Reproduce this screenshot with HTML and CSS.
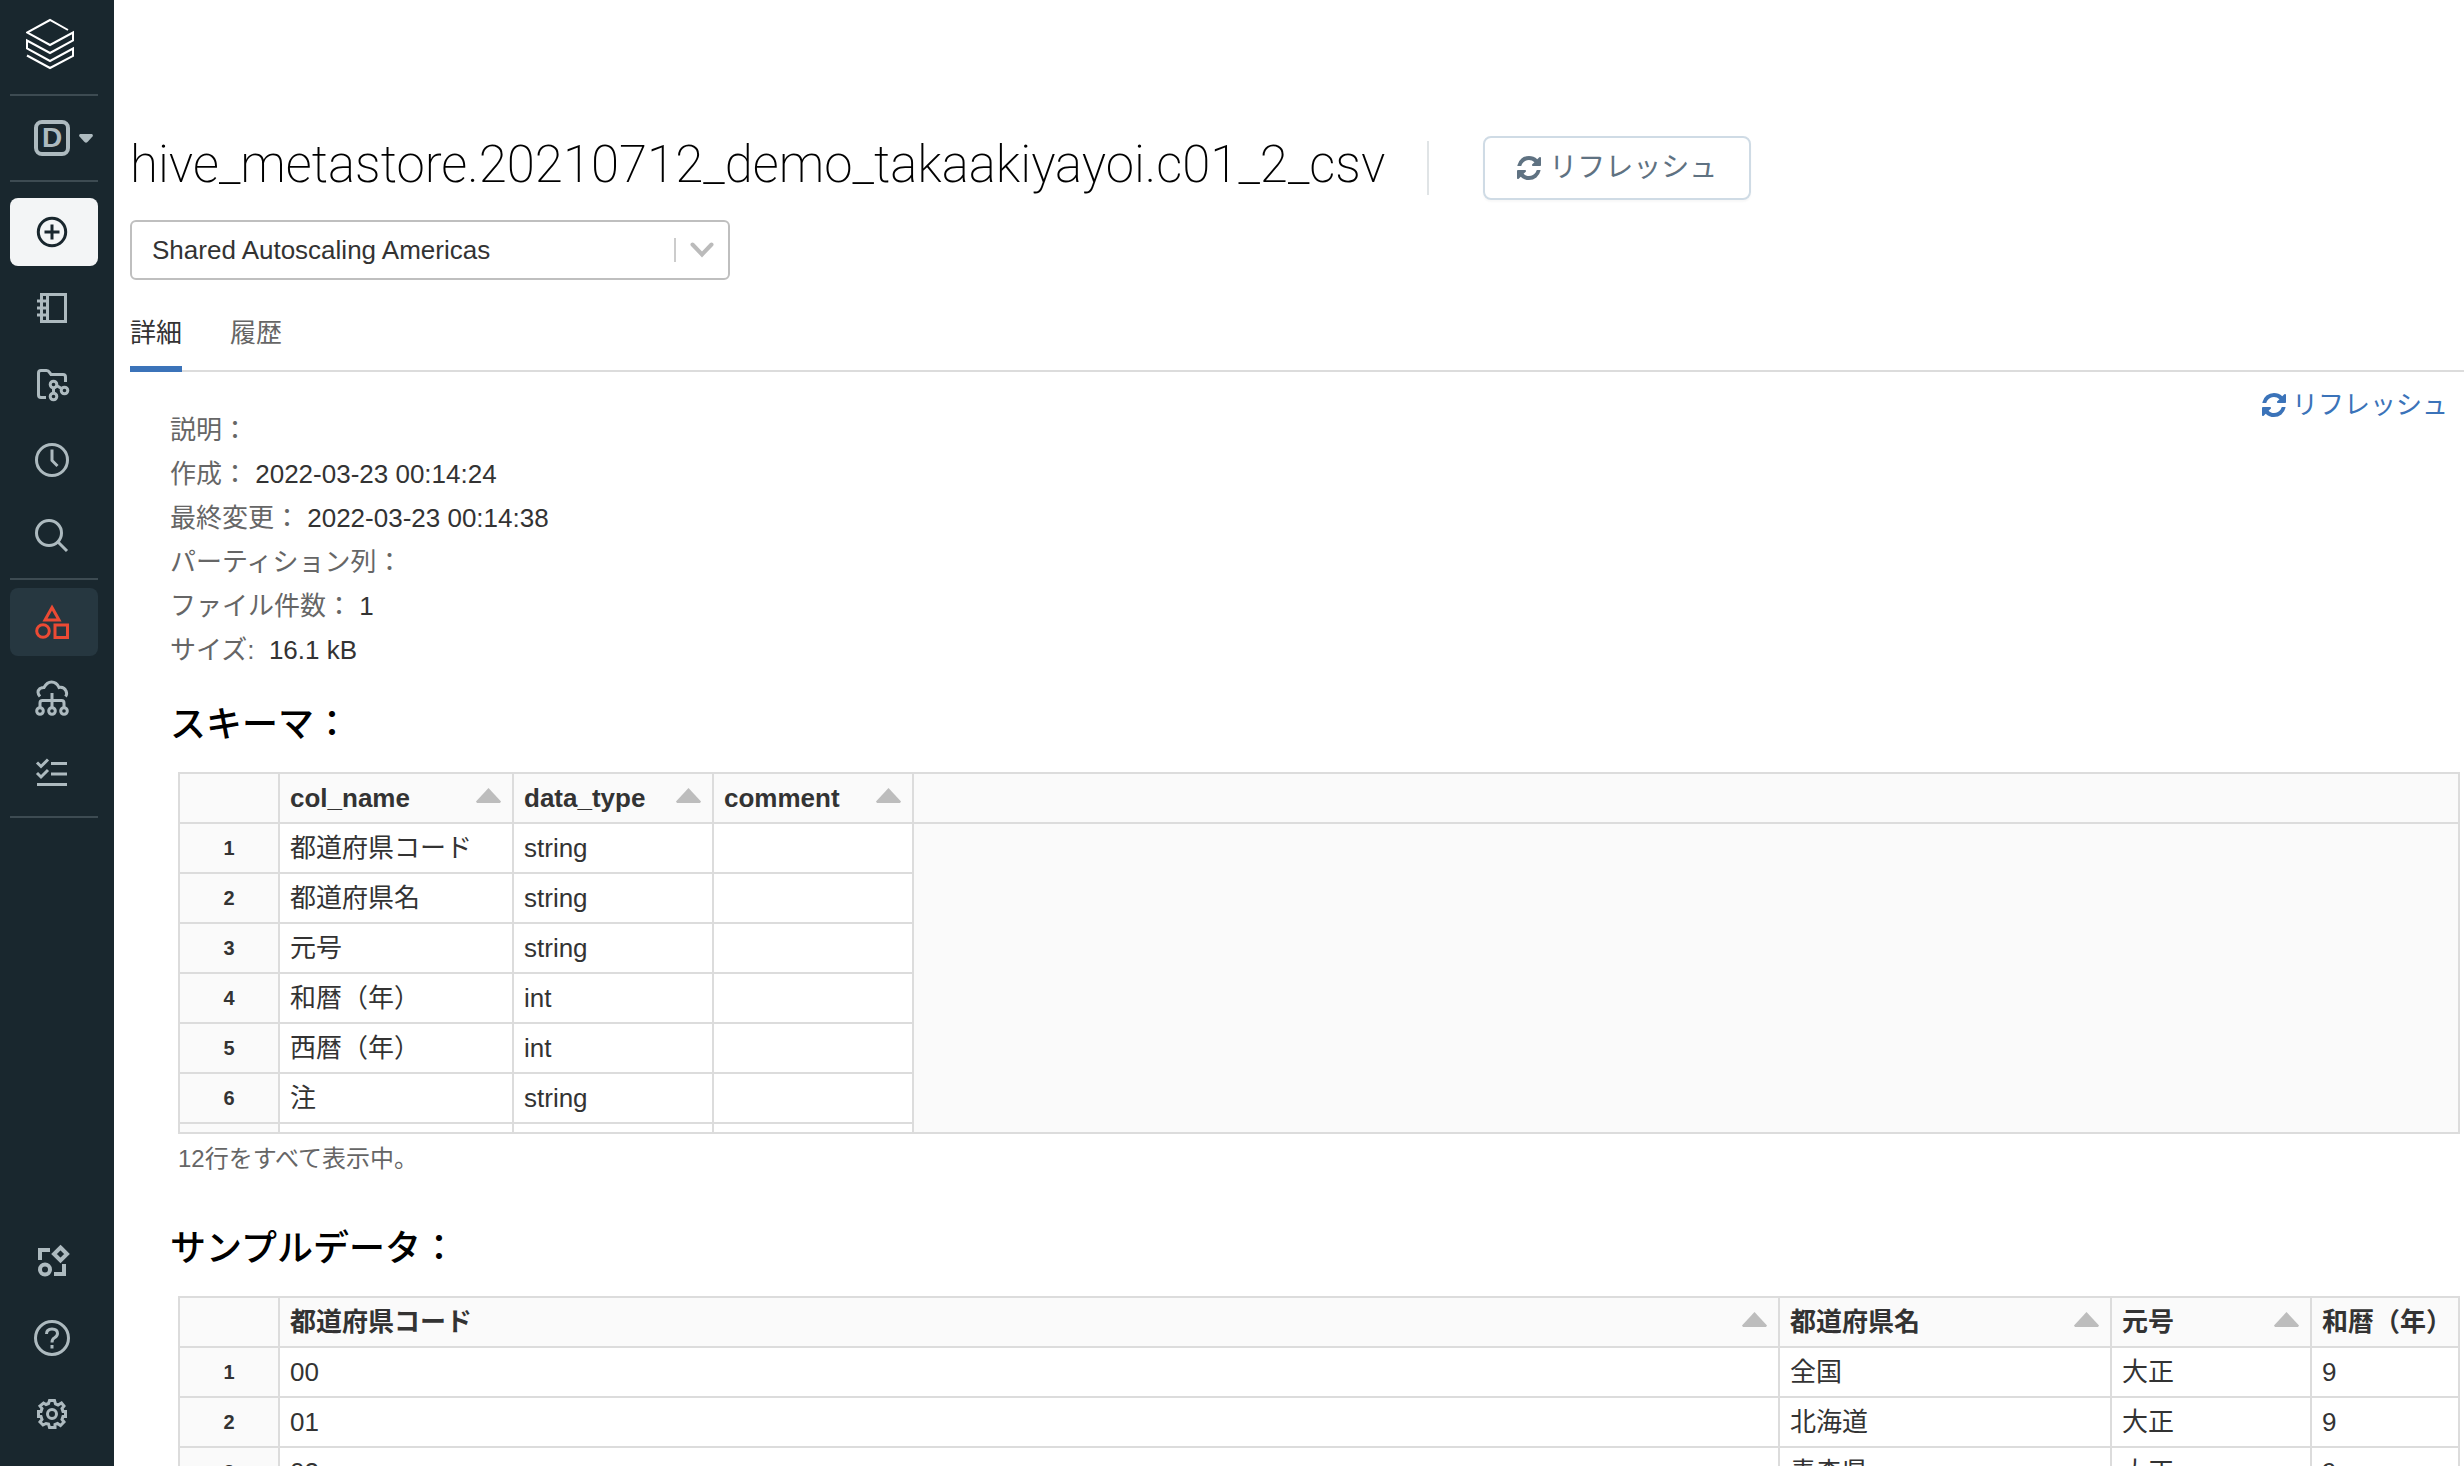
FILE: index.html
```html
<!doctype html>
<html lang="ja">

<head>
  <meta charset="UTF-8" />
  <meta name="viewport" content="width=device-width, initial-scale=1.0" />
  <title>c01_2_csv</title>
  <link rel="stylesheet" href="styles.css">
</head>

<body>
  <nav class="sidebar">
    <a class="logo" href="#" aria-label="Home">
      <svg viewBox="0 0 48 52" width="48" height="52">
        <path d="M42 12L24 2L1 14.500L24 27L47 14.500V22.500L24 35L1 22.500V30.500L24 43L47 30.500V38L24 50L1 37.500" />
      </svg>
    </a>
    <hr>
    <button class="nav-item persona" aria-label="Workspace">
      <span class="persona-badge">D</span>
      <svg class="solid" viewBox="0 0 14 9" width="14" height="9"><path d="M1 0H13Q14.500 1 13.500 2.500L8.500 8Q7 9.500 5.500 8L.5 2.500Q-.5 1 1 0Z" /></svg>
    </button>
    <hr class="last-top">
    <button class="nav-item create" aria-label="Create">
      <svg viewBox="0 0 36 36"><circle cx="18" cy="18" r="13.700" /><path d="M18 10.500V25.500M10.500 18H25.500" /></svg>
    </button>
    <button class="nav-item" aria-label="Workspace files">
      <svg viewBox="0 0 36 36"><path d="M7.500 4.500H31.500V31.500H7.500ZM13.500 4.500V31.500M3 11H13M3 18H13M3 25H13" /></svg>
    </button>
    <button class="nav-item" aria-label="Repos">
      <svg viewBox="0 0 36 36"><path d="M12 31.500H7Q4.500 31.500 4.500 29V7Q4.500 4.500 7 4.500H12.500Q14.500 4.500 15.500 6.500L17 8.500H29Q31.500 8.500 31.500 11V16M19.500 22V27M22.500 19.500L27.500 22.500" /><circle cx="19.500" cy="18.500" r="3.300" /><circle cx="19.500" cy="30.500" r="3.300" /><circle cx="30.500" cy="24.500" r="3.300" /></svg>
    </button>
    <button class="nav-item" aria-label="Recents">
      <svg viewBox="0 0 36 36"><circle cx="18" cy="18" r="15.500" /><path d="M18 7.500V18.500L23.500 24" /></svg>
    </button>
    <button class="nav-item" aria-label="Search">
      <svg viewBox="0 0 36 36"><circle cx="15" cy="15" r="12.500" /><path d="M24 24L33 33" /></svg>
    </button>
    <hr>
    <button class="nav-item active" aria-label="Data">
      <svg viewBox="0 0 36 36"><path d="M18 3.500L25 16H11ZM21 21H33.500V33.500H21Z" /><circle cx="9" cy="27" r="6.300" /></svg>
    </button>
    <button class="nav-item" aria-label="Compute">
      <svg viewBox="0 0 36 36"><path d="M6 16.500Q2 12 6 8.500Q8 7.500 10 7.500Q13 2 17.500 2Q22.500 2 25 7.500Q30 6.500 32 11Q33.500 14 31.500 16.500M18 13V28M6 28V23Q6 20.500 8.500 20.500H27.500Q30 20.500 30 23V28" /><circle cx="6" cy="31" r="3.300" /><circle cx="18" cy="31" r="3.300" /><circle cx="30" cy="31" r="3.300" /></svg>
    </button>
    <button class="nav-item" aria-label="Jobs">
      <svg viewBox="0 0 36 36"><path d="M3 6.500L7 10.500L14 3.500M3 17L7 21L14 14M17 7.500H33M17 18H33M3 28.500H33" /></svg>
    </button>
    <hr>
    <div class="spacer"></div>
    <button class="nav-item" aria-label="Partner Connect">
      <svg class="bold" viewBox="0 0 36 36"><path d="M6 16V6H16M20 30H30V20M26.500 3.500L33 10L26.500 16.500L20 10Z" /><circle cx="11" cy="25.500" r="5" /></svg>
    </button>
    <button class="nav-item" aria-label="Help">
      <svg viewBox="0 0 36 36"><circle cx="18" cy="18" r="16.500" /><path d="M12.500 14Q12.500 9 18 9Q23.500 9 23.500 13.500Q23.500 16 20.500 17.800Q18 19.200 18 22.500M18 25V28.500" /></svg>
    </button>
    <button class="nav-item" aria-label="Settings">
      <svg viewBox="0 0 36 36"><path d="M15.500 4.500H20.500L21.500 8L24 9L27.500 7L30 10L28 12.500L29 15.500H31.500V20.500H29L28 23.500L30 26L26.500 29.500L23.500 27.500L21 28.500V31.500H15.500L14.500 28L12 27.500L9 29L6 26L8 23.500L7 20.500H4.500V15.500H7L8 12.500L6 10L9.500 7L12 8.500L14.500 7.500Z" /><circle cx="18" cy="18" r="4.500" /></svg>
    </button>
  </nav>

  <main>
    <header class="page-header">
      <h1>hive_metastore.20210712_demo_takaakiyayoi.c01_2_csv</h1>
      <button class="refresh-btn">
        <svg class="refresh-icon" viewBox="0 0 1536 1536"><path d="M1511 928q0 5-1 7-64 268-268 434.500t-478 166.500q-146 0-282.500-55t-243.500-157l-129 129q-19 19-45 19t-45-19-19-45v-448q0-26 19-45t45-19h448q26 0 45 19t19 45-19 45l-137 137q71 66 161 102t187 36q134 0 250-65t186-179q11-17 53-117 8-23 30-23h192q13 0 22.500 9.500t9.500 22.500zm25-800v448q0 26-19 45t-45 19h-448q-26 0-45-19t-19-45 19-45l138-138q-148-137-349-137-134 0-250 65t-186 179q-11 17-53 117-8 23-30 23h-199q-13 0-22.500-9.500t-9.500-22.500v-7q65-268 270-434.500t480-166.500q146 0 284 55.500t245 156.500l130-129q19-19 45-19t45 19 19 45z" /></svg>
        リフレッシュ
      </button>
    </header>

    <div class="cluster-select">
      <select aria-label="Cluster">
        <option>Shared Autoscaling Americas</option>
      </select>
      <svg viewBox="0 0 24 16"><path d="M2.500 2.500L12 12.500L21.500 2.500" /></svg>
    </div>

    <div class="tabs" role="tablist">
      <button class="tab selected" role="tab" aria-selected="true">詳細</button>
      <button class="tab" role="tab" aria-selected="false">履歴</button>
    </div>

    <div class="content">
      <div class="summary">
        <ul class="details">
          <li>説明：</li>
          <li>作成： <span>2022-03-23 00:14:24</span></li>
          <li>最終変更： <span>2022-03-23 00:14:38</span></li>
          <li>パーティション列：</li>
          <li>ファイル件数： <span>1</span></li>
          <li>サイズ:&nbsp; <span>16.1 kB</span></li>
        </ul>
        <a class="refresh-link" href="#">
          <svg class="refresh-icon" viewBox="0 0 1536 1536"><path d="M1511 928q0 5-1 7-64 268-268 434.500t-478 166.500q-146 0-282.500-55t-243.500-157l-129 129q-19 19-45 19t-45-19-19-45v-448q0-26 19-45t45-19h448q26 0 45 19t19 45-19 45l-137 137q71 66 161 102t187 36q134 0 250-65t186-179q11-17 53-117 8-23 30-23h192q13 0 22.500 9.500t9.500 22.500zm25-800v448q0 26-19 45t-45 19h-448q-26 0-45-19t-19-45 19-45l138-138q-148-137-349-137-134 0-250 65t-186 179q-11 17-53 117-8 23-30 23h-199q-13 0-22.500-9.500t-9.500-22.500v-7q65-268 270-434.500t480-166.500q146 0 284 55.500t245 156.500l130-129q19-19 45-19t45 19 19 45z" /></svg>
          リフレッシュ
        </a>
      </div>

      <section class="schema">
        <h2>スキーマ：</h2>
        <div class="grid">
          <table>
            <colgroup>
              <col class="w-index">
              <col class="w-name">
              <col class="w-col">
              <col class="w-col">
              <col>
            </colgroup>
            <thead>
              <tr>
                <th></th>
                <th class="sortable">col_name</th>
                <th class="sortable">data_type</th>
                <th class="sortable">comment</th>
                <th class="filler"></th>
              </tr>
            </thead>
            <tbody>
              <tr><th>1</th><td>都道府県コード</td><td>string</td><td></td><td class="filler"></td></tr>
              <tr><th>2</th><td>都道府県名</td><td>string</td><td></td><td class="filler"></td></tr>
              <tr><th>3</th><td>元号</td><td>string</td><td></td><td class="filler"></td></tr>
              <tr><th>4</th><td>和暦（年）</td><td>int</td><td></td><td class="filler"></td></tr>
              <tr><th>5</th><td>西暦（年）</td><td>int</td><td></td><td class="filler"></td></tr>
              <tr><th>6</th><td>注</td><td>string</td><td></td><td class="filler"></td></tr>
              <tr><th></th><td></td><td></td><td></td><td class="filler"></td></tr>
            </tbody>
          </table>
        </div>
        <p class="note">12行をすべて表示中。</p>
      </section>

      <section class="sample">
        <h2>サンプルデータ：</h2>
        <div class="grid">
          <table>
            <colgroup>
              <col class="w-index">
              <col>
              <col class="w-pref">
              <col class="w-col">
              <col class="w-year">
            </colgroup>
            <thead>
              <tr>
                <th></th>
                <th class="sortable">都道府県コード</th>
                <th class="sortable">都道府県名</th>
                <th class="sortable">元号</th>
                <th>和暦（年）</th>
              </tr>
            </thead>
            <tbody>
              <tr><th>1</th><td>00</td><td>全国</td><td>大正</td><td>9</td></tr>
              <tr><th>2</th><td>01</td><td>北海道</td><td>大正</td><td>9</td></tr>
              <tr><th>3</th><td>02</td><td>青森県</td><td>大正</td><td>9</td></tr>
            </tbody>
          </table>
        </div>
      </section>
    </div>
  </main>
</body>

</html>
```
FILE: styles.css
```css
:root {
  --sidebar-bg: #19272e;
  --sidebar-icon: #adbabf;
  --accent: #3b73b9;
  --line: #dcdcdc;
  --cell-bg: #fafafa;
  --text: #333;
  --muted: #666;
}

* {
  margin: 0;
  padding: 0;
  box-sizing: border-box;
}

body {
  display: flex;
  height: 100vh;
  overflow: hidden;
  background: #fff;
  color: var(--text);
  font-family: "Liberation Sans", "Noto Sans CJK JP", sans-serif;
  font-size: 26px;
}

button,
select {
  font: inherit;
  color: inherit;
  border: none;
  background: transparent;
  cursor: pointer;
}

/* sidebar */

.sidebar {
  flex: 0 0 114px;
  display: flex;
  flex-direction: column;
  gap: 8px;
  padding: 18px 16px 18px 10px;
  background: var(--sidebar-bg);
}

.sidebar hr {
  flex: none;
  height: 2px;
  border: none;
  background: #3d4b52;
}

.sidebar .last-top {
  margin-bottom: 8px;
}

.sidebar svg {
  width: 36px;
  height: 36px;
  fill: none;
  stroke: currentColor;
  stroke-width: 3px;
}

.sidebar .bold {
  stroke-width: 4px;
}

.logo {
  height: 68px;
  padding-left: 16px;
  color: #fff;
}

.sidebar .logo svg {
  width: 48px;
  height: 52px;
  stroke-width: 2px;
}

.nav-item {
  flex: none;
  display: flex;
  align-items: center;
  height: 68px;
  padding-left: 24px;
  border-radius: 8px;
  color: var(--sidebar-icon);
}

.persona {
  gap: 9px;
}

.persona-badge {
  flex: none;
  width: 36px;
  height: 36px;
  border: 4px solid;
  border-radius: 8px;
  font-size: 28px;
  font-weight: bold;
  line-height: 28px;
}

.sidebar .solid {
  flex: none;
  width: 14px;
  height: 9px;
  fill: currentColor;
  stroke: none;
}

.create {
  background: #f3f5f6;
  color: var(--sidebar-bg);
}

.active {
  background: #263740;
  color: #eb4a34;
}

.spacer {
  flex: 1;
}

/* page header */

main {
  flex: 1;
  min-width: 0;
  padding-top: 136px;
  overflow: hidden;
}

.page-header {
  display: flex;
  align-items: center;
  gap: 54px;
  height: 64px;
  padding-left: 16px;
}

h1 {
  padding: 0 42px 6px 0;
  border-right: 2px solid #e0e4e6;
  color: #000;
  font-family: Roboto, "Liberation Sans", sans-serif;
  font-size: 51px;
  font-weight: 200;
  line-height: 48px;
  white-space: nowrap;
}

.refresh-btn {
  display: flex;
  align-items: center;
  gap: 8px;
  height: 64px;
  padding: 0 32px;
  border: 2px solid #cfdbe5;
  border-radius: 8px;
  box-shadow: 0 2px 2px rgba(0, 0, 0, 0.03);
  color: #5f7282;
  font-size: 28px;
  line-height: 36px;
  white-space: nowrap;
}

.refresh-icon {
  width: 24px;
  height: 24px;
  fill: currentColor;
}

.cluster-select {
  position: relative;
  width: 600px;
  margin: 20px 0 0 16px;
}

.cluster-select select {
  display: block;
  width: 100%;
  height: 60px;
  padding: 0 60px 0 20px;
  border: 2px solid #bfbfbf;
  border-radius: 6px;
  appearance: none;
}

/* separator and arrow over the select */
.cluster-select svg {
  position: absolute;
  top: 18px;
  right: 16px;
  width: 40px;
  height: 24px;
  padding: 4px 0 4px 14px;
  border-left: 2px solid #ccc;
  fill: none;
  stroke: #bbb;
  stroke-width: 4px;
  stroke-linecap: round;
  pointer-events: none;
}

/* tabs */

.tabs {
  display: flex;
  gap: 48px;
  margin: 28px 0 0 16px;
  box-shadow: inset 0 -2px var(--line);
}

.tab {
  height: 64px;
  padding-bottom: 8px;
  border-bottom: 6px solid transparent;
  color: var(--muted);
  line-height: 50px;
}

.tab.selected {
  border-bottom-color: var(--accent);
  color: var(--text);
}

/* details */

.content {
  padding: 0 4px 0 56px;
}

.summary {
  display: flex;
  justify-content: space-between;
  align-items: flex-start;
}

.details {
  padding-top: 36px;
  list-style: none;
  color: var(--muted);
  line-height: 44px;
}

.details span {
  color: var(--text);
}

.refresh-link {
  display: flex;
  align-items: center;
  gap: 6px;
  margin: 13px 12px 0 0;
  color: var(--accent);
  line-height: 40px;
  text-decoration: none;
}

/* tables */

.schema {
  margin-top: 29px;
}

.sample {
  margin-top: 48px;
}

h2 {
  margin-bottom: 23px;
  color: #000;
  font-size: 36px;
  font-weight: 500;
  line-height: 48px;
}

.grid {
  margin-left: 8px;
  border: 2px solid var(--line);
  background: var(--cell-bg);
  overflow: hidden;
}

.schema .grid {
  height: 362px;
}

table {
  width: 100%;
  table-layout: fixed;
  border-collapse: separate;
  border-spacing: 0;
}

.w-index {
  width: 100px;
}

.w-name {
  width: 234px;
}

.w-col {
  width: 200px;
}

.w-pref {
  width: 332px;
}

.w-year {
  width: 146px;
}

th,
td {
  height: 50px;
  padding: 0 10px;
  border-right: 2px solid var(--line);
  border-bottom: 2px solid var(--line);
  line-height: 40px;
  text-align: left;
  white-space: nowrap;
}

td {
  background: #fff;
}

th:last-child,
td:last-child {
  border-right: none;
}

tbody th {
  font-size: 20px;
  text-align: center;
}

td.filler {
  border-bottom: none;
  background: var(--cell-bg);
}

.sortable::after {
  content: '';
  float: right;
  width: 25px;
  height: 15px;
  margin: 10px 1px 0 0;
  background: #bdbdbd;
  clip-path: polygon(50% 0, 100% 90%, 96% 100%, 4% 100%, 0 90%);
}

.note {
  margin: 7px 0 0 8px;
  color: var(--muted);
  font-size: 24px;
  line-height: 36px;
}
```
